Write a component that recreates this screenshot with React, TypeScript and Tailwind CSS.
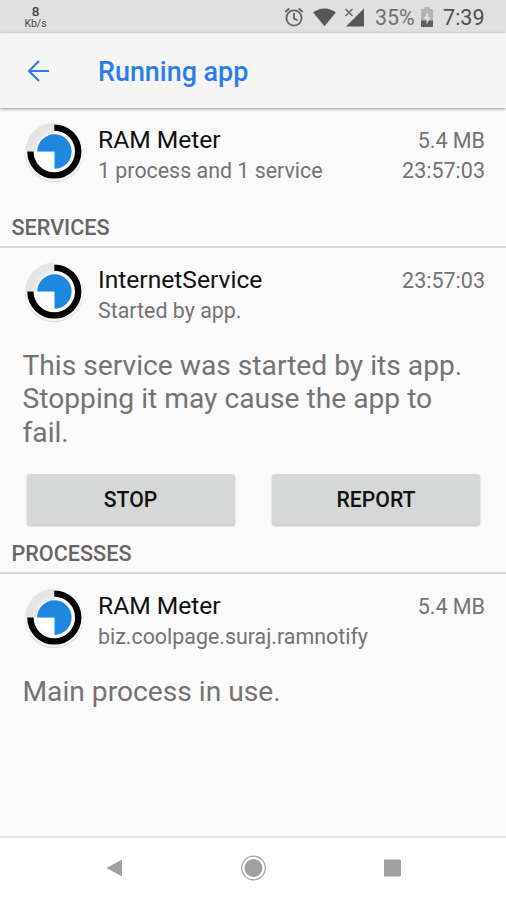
import { type ReactElement, type ReactNode } from 'react';

interface AppRowProps {
  title: string;
  subtitle: string;
  size: string;
  uptime?: string;
}

function AppIcon(): ReactElement {
  return (
    <svg width="62" height="62" viewBox="0 0 62 62" className="shrink-0">
      <circle cx="31.3" cy="30.8" r="29.4" fill="#dedede" />
      <circle cx="31.3" cy="29.7" r="29.2" fill="#f6f6f6" />
      <path d="M31.3 29.5V.5A29 29 0 0 0 2.3 29.5Z" fill="#e4e4e4" />
      <circle cx="31.3" cy="29.5" r="21.5" fill="#fff" />
      <path d="M31.3 29.5V8A21.5 21.5 0 0 0 9.8 29.5Z" fill="#e8e8e8" />
      <circle cx="31.3" cy="29.5" r="18.6" fill="#f8f8f8" />
      <path d="M31.3 5.6A23.9 23.9 0 1 1 7.4 29.5" fill="none" stroke="#000" strokeWidth="6.4" />
      <path d="M31.3 29.8H14.2A17.2 17.2 0 1 1 31.3 46.7Z" fill="#1e88e0" />
      <path d="M31.3 29.8V46.7A17.2 17.2 0 0 1 14.2 29.8Z" fill="#fff" />
    </svg>
  );
}

function AppRow({ title, subtitle, size, uptime }: AppRowProps): ReactElement {
  return (
    <div className="flex h-[62px] items-start pl-[23px] pr-[21px]">
      <AppIcon />
      <div className="ml-[13px] flex-1 whitespace-nowrap">
        <div className="h-[34px] text-[24.6px] leading-[36px] text-[#111]">{title}</div>
        <div className="h-[28px] text-[21.4px] leading-[30px] text-[#737373]">{subtitle}</div>
      </div>
      <div className="text-right text-[21.5px] text-[#737373]">
        <div className="h-[34px] leading-[38px]">{size}</div>
        {uptime && <div className="h-[28px] leading-[30px]">{uptime}</div>}
      </div>
    </div>
  );
}

function SectionHeader({ children }: { children: ReactNode }): ReactElement {
  return (
    <h2 className="h-[40px] border-b-2 border-[#d6d6d6] pl-[11.5px] text-[21.6px] font-medium leading-[40px] text-[#666]">
      {children}
    </h2>
  );
}

function ActionButton({ label }: { label: string }): ReactElement {
  return (
    <button className="h-[51px] w-[208px] rounded-[3px] bg-[#d6d8d7] pt-px text-[21.2px] font-medium text-[#111] shadow-[0_1px_2px_rgba(0,0,0,0.25)]">
      {label}
    </button>
  );
}

function StatusBar(): ReactElement {
  return (
    <div className="flex h-[33px] items-center bg-[#e0e0e0] text-[#5c5c5c]">
      <div className="ml-[23px] w-[25px] text-center text-[#444]">
        <div className="text-[13.5px] font-medium leading-[14px]">8</div>
        <div className="text-[10.5px] leading-[11px]">Kb/s</div>
      </div>
      <svg width="94" height="24" viewBox="0 0 94 24" className="ml-[234px]">
        <g fill="none" stroke="#636363" strokeWidth="1.8">
          <circle cx="12" cy="13" r="7.6" />
          <path d="M12 8v5.4l3.6 2.2M3.2 7l4.1-3.5M20.8 7l-4.1-3.5" />
        </g>
        <path d="M31 7.2Q42.5-.4 54 7.2L42.5 21.2Z" fill="#575757" />
        <path d="M82 3.5V21.5H64Z" fill="#575757" />
        <path d="M60 3.5h11v8.5H60Z" fill="#e0e0e0" />
        <path d="M63.5 4l7 7M70.5 4l-7 7" stroke="#636363" strokeWidth="1.4" />
      </svg>
      <span className="-ml-px w-[45px] whitespace-nowrap pt-[3px] text-[21.4px] text-[#707070]">35%</span>
      <svg width="12" height="20" viewBox="0 0 12 20" className="ml-[1px]">
        <path d="M3.5 0h5v2H11q1 0 1 1v16q0 1-1 1H1q-1 0-1-1V3q0-1 1-1h2.5Z" fill="#b2b2b2" />
        <path d="M0 13.5h12V19q0 1-1 1H1q-1 0-1-1Z" fill="#606060" />
        <path d="M7 5L2.5 12.2h3v5.3l4.3-7.5H7Z" fill="#e0e0e0" />
      </svg>
      <span className="ml-[10px] whitespace-nowrap pt-[3px] text-[21.6px] text-[#505050]">7:39</span>
    </div>
  );
}

function NavigationBar(): ReactElement {
  return (
    <nav className="flex h-[64px] items-center justify-center border-t-2 border-[#e7e7e7] bg-white">
      <svg width="300" height="28" viewBox="0 0 300 28" fill="#a0a0a0" className="mb-[2px]">
        <path d="M3.5 14L19 5.5V22.5Z" />
        <circle cx="150.5" cy="14" r="9" />
        <circle cx="150.5" cy="14" r="11.8" fill="none" stroke="#a0a0a0" strokeWidth="1.2" />
        <rect x="281" y="5.5" width="17" height="17" rx=".8" />
      </svg>
    </nav>
  );
}

export default function App(): ReactElement {
  return (
    <div className="flex h-[900px] w-[506px] flex-col overflow-hidden bg-[#fafafa] font-['Roboto',sans-serif]">
      <StatusBar />

      <header className="flex h-[75px] items-center bg-[#f5f5f5] text-[#2b7de9] shadow-[0_1px_3px_rgba(0,0,0,0.4)]">
        <svg
          width="24"
          height="24"
          viewBox="0 0 24 24"
          fill="none"
          stroke="currentColor"
          strokeWidth="2.1"
          className="ml-[26px]"
        >
          <path d="M23 12H3M13 2L3 12l10 10" />
        </svg>
        <h1 className="ml-[48px] whitespace-nowrap pt-[2px] text-[26.9px] font-medium leading-[34px]">
          Running app
        </h1>
      </header>

      <main className="flex-1">
        <div className="pt-[14px]">
          <AppRow title="RAM Meter" subtitle="1 process and 1 service" size="5.4 MB" uptime="23:57:03" />
        </div>

        <section className="pt-[24px]">
          <SectionHeader>SERVICES</SectionHeader>
          <div className="pt-[14px]">
            <AppRow title="InternetService" subtitle="Started by app." size="23:57:03" />
          </div>
          <p className="mt-[25px] px-[22.5px] text-[28.2px] leading-[33.3px] text-[#737373]">
            This service was started by its app.
            <br />
            Stopping it may cause the app to
            <br />
            fail.
          </p>
          <div className="mt-[25px] flex justify-between pl-[26.5px] pr-[26px]">
            <ActionButton label="STOP" />
            <ActionButton label="REPORT" />
          </div>
        </section>

        <section className="pt-[9px]">
          <SectionHeader>PROCESSES</SectionHeader>
          <div className="pt-[14px]">
            <AppRow title="RAM Meter" subtitle="biz.coolpage.suraj.ramnotify" size="5.4 MB" />
          </div>
          <p className="mt-[25px] px-[22.5px] text-[28.2px] leading-[33.3px] text-[#737373]">
            Main process in use.
          </p>
        </section>
      </main>

      <NavigationBar />
    </div>
  );
}
